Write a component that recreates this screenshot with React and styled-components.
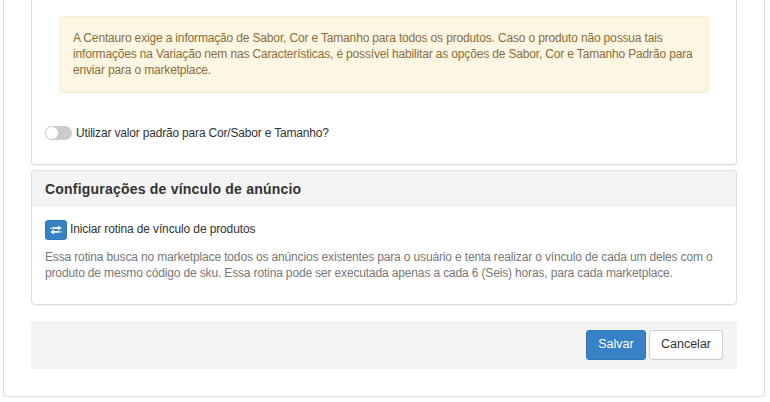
import { useState } from 'react';
import styled, { createGlobalStyle } from 'styled-components';

const GlobalStyle = createGlobalStyle`
  * {
    box-sizing: border-box;
  }
  body {
    margin: 0;
    background: #fff;
    color: #333;
    font-family: "Liberation Sans", Arial, sans-serif;
    font-size: 12px;
    line-height: 16px;
    letter-spacing: -0.16px;
    overflow: hidden;
  }
`;

const Pagina = styled.main`
  width: 762px;
  height: 397px;
  margin-left: 3px;
  padding: 0 27px;
  border: 1px solid #ddd;
  border-top: 0;
  border-radius: 0 0 4px 4px;
  box-shadow: 0 1px 1px rgba(0, 0, 0, 0.05);
`;

const Painel = styled.section`
  height: ${({ $altura }) => $altura}px;
  margin-bottom: ${({ $margem }) => $margem}px;
  border: 1px solid #ddd;
  border-top-width: ${({ $continua }) => ($continua ? 0 : 1)}px;
  border-radius: ${({ $continua }) => ($continua ? '0 0 4px 4px' : '4px')};
  box-shadow: 0 1px 1px rgba(0, 0, 0, 0.05);
`;

const PainelTitulo = styled.h3`
  height: 36px;
  margin: 0;
  padding: 0 13px;
  background: #f4f4f4;
  border-radius: 3px 3px 0 0;
  font-size: 14px;
  line-height: 36px;
  letter-spacing: 0.21px;
`;

const PainelCorpo = styled.div`
  padding: ${({ $topo }) => $topo}px 13px 0;
`;

const Alerta = styled.div`
  height: 77px;
  margin: 0 14px 32px;
  padding: 13px;
  color: #8a6d3b;
  background: #fcf6e2;
  border: 1px solid #faebcc;
  border-radius: 3px;
`;

const Opcao = styled.label`
  display: flex;
  align-items: center;
  gap: 4px;
  letter-spacing: -0.18px;
`;

const Interruptor = styled.button`
  display: flex;
  justify-content: ${({ $ligado }) => ($ligado ? 'flex-end' : 'flex-start')};
  width: 27px;
  height: 14px;
  padding: 1px;
  border: 0;
  border-radius: 7px;
  background: ${({ $ligado }) => ($ligado ? '#3782c6' : '#ccc')};
`;

const Bolinha = styled.span`
  width: 12px;
  height: 12px;
  border-radius: 50%;
  background: #fff;
`;

const Rotina = styled.div`
  display: flex;
  align-items: center;
  gap: 3px;
  height: 20px;
  letter-spacing: -0.13px;
`;

const RotinaTexto = styled.span`
  padding-bottom: 2px;
`;

const BotaoIcone = styled.button`
  display: flex;
  align-items: center;
  justify-content: center;
  width: 22px;
  height: 20px;
  padding: 0;
  border: 1px solid #3079b8;
  border-radius: 3px;
  background: #3782c6;
  color: #fff;
`;

const Ajuda = styled.p`
  margin: 9px 0 0;
  color: #777;
  letter-spacing: -0.15px;
`;

const Rodape = styled.footer`
  display: flex;
  justify-content: flex-end;
  gap: 3px;
  height: 48px;
  padding: 9px 14px;
  background: #f4f4f4;
  border-radius: 2px;
`;

const Botao = styled.button`
  width: ${({ $primario }) => ($primario ? 60 : 74)}px;
  height: 30px;
  padding: 0 0 3px;
  border: 1px solid ${({ $primario }) => ($primario ? '#3079b8' : '#ccc')};
  border-radius: 3px;
  background: ${({ $primario }) => ($primario ? '#3782c6' : '#fff')};
  color: ${({ $primario }) => ($primario ? '#fff' : '#333')};
  font-family: inherit;
  font-size: 12.5px;
  letter-spacing: 0;
`;

const IconeTransferir = () => (
  <svg width="12" height="10" viewBox="0 0 12 10" fill="currentColor">
    <path d="M3 2.2h5V.4l3.6 2.7L8 5.6V4H3zM.6 2.2h.6V4H.6zM1.7 2.2h.8V4h-.8z" />
    <path d="M9 6H4V4.4L.4 7.1 4 9.6V7.8h5zM9.5 6h.8v1.8h-.8zM10.8 6h.6v1.8h-.6z" />
  </svg>
);

export default function App() {
  const [ligado, setLigado] = useState(false);

  return (
    <>
      <GlobalStyle />
      <Pagina>
        <Painel $altura={165} $margem={5} $continua>
          <PainelCorpo $topo={16}>
            <Alerta>
              A Centauro exige a informação de Sabor, Cor e Tamanho para todos os produtos. Caso o produto não possua tais
              informações na Variação nem nas Características, é possível habilitar as opções de Sabor, Cor e Tamanho Padrão para
              enviar para o marketplace.
            </Alerta>
            <Opcao>
              <Interruptor type="button" $ligado={ligado} onClick={() => setLigado(!ligado)}>
                <Bolinha />
              </Interruptor>
              Utilizar valor padrão para Cor/Sabor e Tamanho?
            </Opcao>
          </PainelCorpo>
        </Painel>
        <Painel $altura={135} $margem={16}>
          <PainelTitulo>Configurações de vínculo de anúncio</PainelTitulo>
          <PainelCorpo $topo={13}>
            <Rotina>
              <BotaoIcone type="button">
                <IconeTransferir />
              </BotaoIcone>
              <RotinaTexto>Iniciar rotina de vínculo de produtos</RotinaTexto>
            </Rotina>
            <Ajuda>
              Essa rotina busca no marketplace todos os anúncios existentes para o usuário e tenta realizar o vínculo de cada um deles com o
              produto de mesmo código de sku. Essa rotina pode ser executada apenas a cada 6 (Seis) horas, para cada marketplace.
            </Ajuda>
          </PainelCorpo>
        </Painel>
        <Rodape>
          <Botao type="button" $primario>Salvar</Botao>
          <Botao type="button">Cancelar</Botao>
        </Rodape>
      </Pagina>
    </>
  );
}
